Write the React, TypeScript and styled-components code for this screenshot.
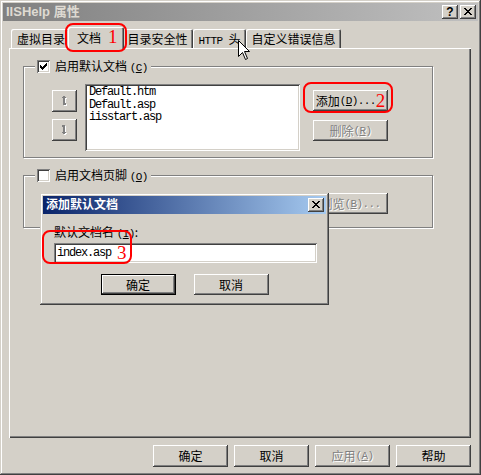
import React from "react";
import styled, { createGlobalStyle, css } from "styled-components";

const FACE = "#d4d0c8";
const SHADOW = "#808080";
const DARK = "#404040";
const CJK = `"Noto Sans CJK SC", "Liberation Sans", sans-serif`;

const Global = createGlobalStyle`
  html, body { margin: 0; padding: 0; background: ${FACE}; }
  body { font-family: ${CJK}; font-size: 12px; color: #000; }
  * { box-sizing: border-box; }
`;

const outset = css`
  box-shadow: inset -1px -1px ${DARK}, inset 1px 1px #fff,
    inset -2px -2px ${SHADOW}, inset 2px 2px ${FACE};
`;
const sunken = css`
  box-shadow: inset 1px 1px ${SHADOW}, inset -1px -1px #fff,
    inset 2px 2px ${DARK}, inset -2px -2px ${FACE};
`;

const Window = styled.div`
  position: relative;
  width: 481px;
  height: 475px;
  background: ${FACE};
  padding: 3px;
  box-shadow: inset -1px -1px ${DARK}, inset 1px 1px ${FACE},
    inset -2px -2px ${SHADOW}, inset 2px 2px #fff;
  display: flex;
  flex-direction: column;
  overflow: hidden;
`;

const TitleBar = styled.div<{ $active?: boolean }>`
  height: 18px;
  flex: none;
  display: flex;
  align-items: center;
  padding: 0 2px 0 3px;
  background: linear-gradient(
    to right,
    ${(p) => (p.$active ? "#0a246a, #a6caf0" : "#808080, #c0c0c0")}
  );
  color: ${(p) => (p.$active ? "#fff" : "#dedad2")};
  font-weight: bold;
  font-size: ${(p) => (p.$active ? 12 : 13)}px;
`;

const TitleText = styled.span`
  flex: 1;
  font-family: "Liberation Sans", ${CJK};
  white-space: nowrap;
  line-height: 18px;
`;

const TitleButtons = styled.div`
  display: flex;
  gap: 2px;
`;

const TitleButton = styled.div`
  width: 16px;
  height: 14px;
  background: ${FACE};
  ${outset};
  display: flex;
  align-items: center;
  justify-content: center;
  color: #000;
  font-family: "Liberation Sans", sans-serif;
  font-size: 12px;
  font-weight: bold;
  line-height: 14px;
  padding-bottom: 1px;
`;

const Body = styled.div`
  flex: 1;
  display: flex;
  flex-direction: column;
  padding: 0 7px 0 6px;
`;

const TabRow = styled.div`
  display: flex;
  align-items: flex-end;
  height: 22px;
  margin-top: 6px;
  margin-bottom: -1px;
  padding-left: 2px;
  position: relative;
  z-index: 1;
`;

const Tab = styled.div<{ $sel?: boolean }>`
  height: ${(p) => (p.$sel ? 22 : 19)}px;
  margin: 0 ${(p) => (p.$sel ? -2 : 0)}px ${(p) => (p.$sel ? 0 : 1)}px;
  padding: 0 ${(p) => (p.$sel ? "6px 0 9px" : "5px 0 6px")};
  padding-bottom: ${(p) => (p.$sel ? 2 : 0)}px;
  background: ${FACE};
  border-radius: 2px 2px 0 0;
  box-shadow: inset 1px 1px #fff, inset -1px 0 ${DARK}, inset -2px 0 ${SHADOW};
  display: flex;
  align-items: center;
  gap: 7px;
  white-space: nowrap;
  position: relative;
  z-index: ${(p) => (p.$sel ? 2 : 1)};
`;

const Hw = styled.span`
  font-family: "Liberation Mono", monospace;
  font-size: 11px;
  letter-spacing: -0.6px;
`;

const RedNum = styled.span`
  font-family: "Liberation Serif", serif;
  font-size: 19px;
  line-height: 12px;
  color: #ff0000;
`;

const Panel = styled.div`
  height: 390px;
  flex: none;
  background: ${FACE};
  box-shadow: inset 1px 1px #fff, inset -1px -1px ${DARK},
    inset -2px -2px ${SHADOW};
  padding: 18px 38px 0 14px;
  display: flex;
  flex-direction: column;
`;

const GroupFrame = styled.div<{ $gapTop?: number; $padBottom: number }>`
  margin-top: ${(p) => p.$gapTop ?? 0}px;
  border: 1px solid ${SHADOW};
  box-shadow: 1px 1px 0 #fff, inset 1px 1px 0 #fff;
  padding-bottom: ${(p) => p.$padBottom}px;
  display: flex;
  flex-direction: column;
`;

const Legend = styled.label`
  align-self: flex-start;
  height: 13px;
  margin: -7px 0 0 11px;
  padding: 0 3px 0 2px;
  background: ${FACE};
  display: flex;
  align-items: center;
  gap: 5px;
  white-space: nowrap;
  line-height: 13px;
`;

const CheckBox = styled.span`
  width: 13px;
  height: 13px;
  flex: none;
  background: #fff;
  ${sunken};
  display: flex;
  align-items: center;
  justify-content: center;
`;

const GroupRow = styled.div<{ $top?: number }>`
  display: flex;
  align-items: flex-start;
  margin-top: ${(p) => p.$top ?? 11}px;
  padding-left: 28px;
`;

const ArrowCol = styled.div`
  display: flex;
  flex-direction: column;
  gap: 7px;
  margin-top: 6px;
  width: 25px;
`;

const ListBox = styled.div`
  width: 215px;
  height: 67px;
  margin-left: 8px;
  background: #fff;
  ${sunken};
  padding: 2px 0 0 4px;
  font-family: "Liberation Mono", monospace;
  font-size: 12px;
  letter-spacing: -1.2px;
  line-height: 12.5px;
`;

const ListItem = styled.div`
  white-space: nowrap;
`;

const Spacer = styled.div<{ $w: number }>`
  width: ${(p) => p.$w}px;
  flex: none;
`;

const ButtonCol = styled.div<{ $top?: number }>`
  display: flex;
  flex-direction: column;
  gap: 9px;
  margin: ${(p) => p.$top ?? 6}px 0 0 13px;
`;

const Button = styled.div<{
  $w?: number;
  $h?: number;
  $disabled?: boolean;
  $default?: boolean;
}>`
  width: ${(p) => p.$w ?? 75}px;
  height: ${(p) => p.$h ?? 21}px;
  flex: none;
  background: ${FACE};
  ${(p) =>
    p.$default
      ? css`
          box-shadow: inset 0 0 0 1px #000, inset -2px -2px ${DARK},
            inset 2px 2px #fff, inset -3px -3px ${SHADOW};
        `
      : outset};
  display: flex;
  align-items: center;
  justify-content: center;
  white-space: nowrap;
  color: ${(p) => (p.$disabled ? SHADOW : "#000")};
  text-shadow: ${(p) => (p.$disabled ? "1px 1px 0 #fff" : "none")};
  line-height: 12px;
`;

const ButtonBar = styled.div`
  display: flex;
  justify-content: flex-end;
  gap: 6px;
  margin-top: 7px;
`;

const Dialog = styled.div`
  position: absolute;
  left: 40px;
  top: 193px;
  width: 289px;
  height: 112px;
  background: ${FACE};
  padding: 3px;
  box-shadow: inset -1px -1px ${DARK}, inset 1px 1px ${FACE},
    inset -2px -2px ${SHADOW}, inset 2px 2px #fff;
  display: flex;
  flex-direction: column;
  z-index: 5;
`;

const DialogBody = styled.div`
  display: flex;
  flex-direction: column;
  padding: 0 9px 0 11px;
`;

const FieldLabel = styled.div`
  margin-top: 12px;
  line-height: 12px;
  white-space: nowrap;
`;

const TextInput = styled.div`
  margin-top: 3px;
  height: 20px;
  background: #fff;
  ${sunken};
  padding: 0 0 0 3px;
  display: flex;
  align-items: center;
  gap: 6px;
`;

const MonoText = styled.span`
  font-family: "Liberation Mono", monospace;
  font-size: 12px;
  letter-spacing: -1.2px;
`;

const DialogButtons = styled.div`
  display: flex;
  justify-content: center;
  gap: 18px;
  margin-top: 11px;
  padding-right: 2px;
`;

const Mark = styled.div<{ $x: number; $y: number; $w: number; $h: number }>`
  position: absolute;
  left: ${(p) => p.$x}px;
  top: ${(p) => p.$y}px;
  width: ${(p) => p.$w}px;
  height: ${(p) => p.$h}px;
  border: 2px solid #ff0000;
  border-radius: 8px;
  z-index: 10;
  pointer-events: none;
`;

const Cursor = styled.svg`
  position: absolute;
  left: 238px;
  top: 40px;
  z-index: 11;
`;

const Check = () => (
  <svg width="7" height="7" viewBox="0 0 7 7" shapeRendering="crispEdges">
    <path
      d="M0 2h1v3H0zM1 3h1v3H1zM2 4h1v3H2zM3 3h1v3H3zM4 2h1v3H4zM5 1h1v3H5zM6 0h1v3H6z"
      fill="#000"
    />
  </svg>
);

const CloseGlyph = () => (
  <svg width="8" height="7" viewBox="0 0 8 7" shapeRendering="crispEdges">
    <path
      d="M0 0h2v1H0zM6 0h2v1H6zM1 1h2v1H1zM5 1h2v1H5zM2 2h4v1H2zM3 3h2v1H3zM2 4h4v1H2zM1 5h2v1H1zM5 5h2v1H5zM0 6h2v1H0zM6 6h2v1H6z"
      fill="#000"
    />
  </svg>
);

const upPath = "M2 0h2v1H2zM1 1h4v1H1zM2 2h2v7H2zM4 7h1v2H4z";
const downPath = "M1 0h1v2H1zM2 0h2v7H2zM1 7h4v1H1zM2 8h2v1H2z";

const ArrowGlyph = ({ d }: { d: string }) => (
  <svg width="7" height="11" viewBox="0 0 7 11" shapeRendering="crispEdges">
    <path d={d} fill="#fff" transform="translate(1 1)" />
    <path d={d} fill={SHADOW} />
  </svg>
);

export default function App() {
  return (
    <>
      <Global />
      <Window>
        <TitleBar>
          <TitleText>IISHelp 属性</TitleText>
          <TitleButtons>
            <TitleButton>?</TitleButton>
            <TitleButton>
              <CloseGlyph />
            </TitleButton>
          </TitleButtons>
        </TitleBar>
        <Body>
          <TabRow>
            <Tab>虚拟目录</Tab>
            <Tab $sel>
              文档<RedNum>1</RedNum>
            </Tab>
            <Tab>目录安全性</Tab>
            <Tab>
              <span>
                <Hw>HTTP </Hw>头
              </span>
            </Tab>
            <Tab>自定义错误信息</Tab>
          </TabRow>
          <Panel>
            <GroupFrame $padBottom={6}>
              <Legend>
                <CheckBox>
                  <Check />
                </CheckBox>
                <span>
                  启用默认文档 <Hw>(<u>C</u>)</Hw>
                </span>
              </Legend>
              <GroupRow>
                <ArrowCol>
                  <Button $w={25} $h={22}>
                    <ArrowGlyph d={upPath} />
                  </Button>
                  <Button $w={25} $h={22}>
                    <ArrowGlyph d={downPath} />
                  </Button>
                </ArrowCol>
                <ListBox>
                  <ListItem>Default.htm</ListItem>
                  <ListItem>Default.asp</ListItem>
                  <ListItem>iisstart.asp</ListItem>
                </ListBox>
                <ButtonCol>
                  <Button>
                    添加 <Hw>(<u>D</u>)...</Hw>
                    <RedNum>2</RedNum>
                  </Button>
                  <Button $disabled>
                    删除 <Hw>(<u>R</u>)</Hw>
                  </Button>
                </ButtonCol>
              </GroupRow>
            </GroupFrame>
            <GroupFrame $gapTop={17} $padBottom={13}>
              <Legend>
                <CheckBox />
                <span>
                  启用文档页脚 <Hw>(<u>O</u>)</Hw>
                </span>
              </Legend>
              <GroupRow>
                <Spacer $w={248} />
                <ButtonCol $top={0}>
                  <Button $disabled>
                    浏览 <Hw>(<u>B</u>)...</Hw>
                  </Button>
                </ButtonCol>
              </GroupRow>
            </GroupFrame>
          </Panel>
          <ButtonBar>
            <Button $h={22}>确定</Button>
            <Button $h={22}>取消</Button>
            <Button $h={22} $disabled>
              应用 <Hw>(<u>A</u>)</Hw>
            </Button>
            <Button $h={22}>帮助</Button>
          </ButtonBar>
        </Body>

        <Dialog>
          <TitleBar $active>
            <TitleText>添加默认文档</TitleText>
            <TitleButton>
              <CloseGlyph />
            </TitleButton>
          </TitleBar>
          <DialogBody>
            <FieldLabel>
              默认文档名 <Hw>(<u>I</u>)</Hw>:
            </FieldLabel>
            <TextInput>
              <MonoText>index.asp</MonoText>
              <RedNum>3</RedNum>
            </TextInput>
            <DialogButtons>
              <Button $default>确定</Button>
              <Button>取消</Button>
            </DialogButtons>
          </DialogBody>
        </Dialog>

        <Mark $x={65} $y={23} $w={62} $h={29} />
        <Mark $x={303} $y={82} $w={90} $h={31} />
        <Mark $x={42} $y={230} $w={90} $h={34} />

        <Cursor width="13" height="21" viewBox="0 0 13 21">
          <path
            d="M0.5 0.5 V16.5 L4.5 12.5 L7.5 19.5 L9.5 18.5 L6.5 11.5 H11.5 Z"
            fill="#fff"
            stroke="#000"
            strokeWidth="1"
          />
        </Cursor>
      </Window>
    </>
  );
}
